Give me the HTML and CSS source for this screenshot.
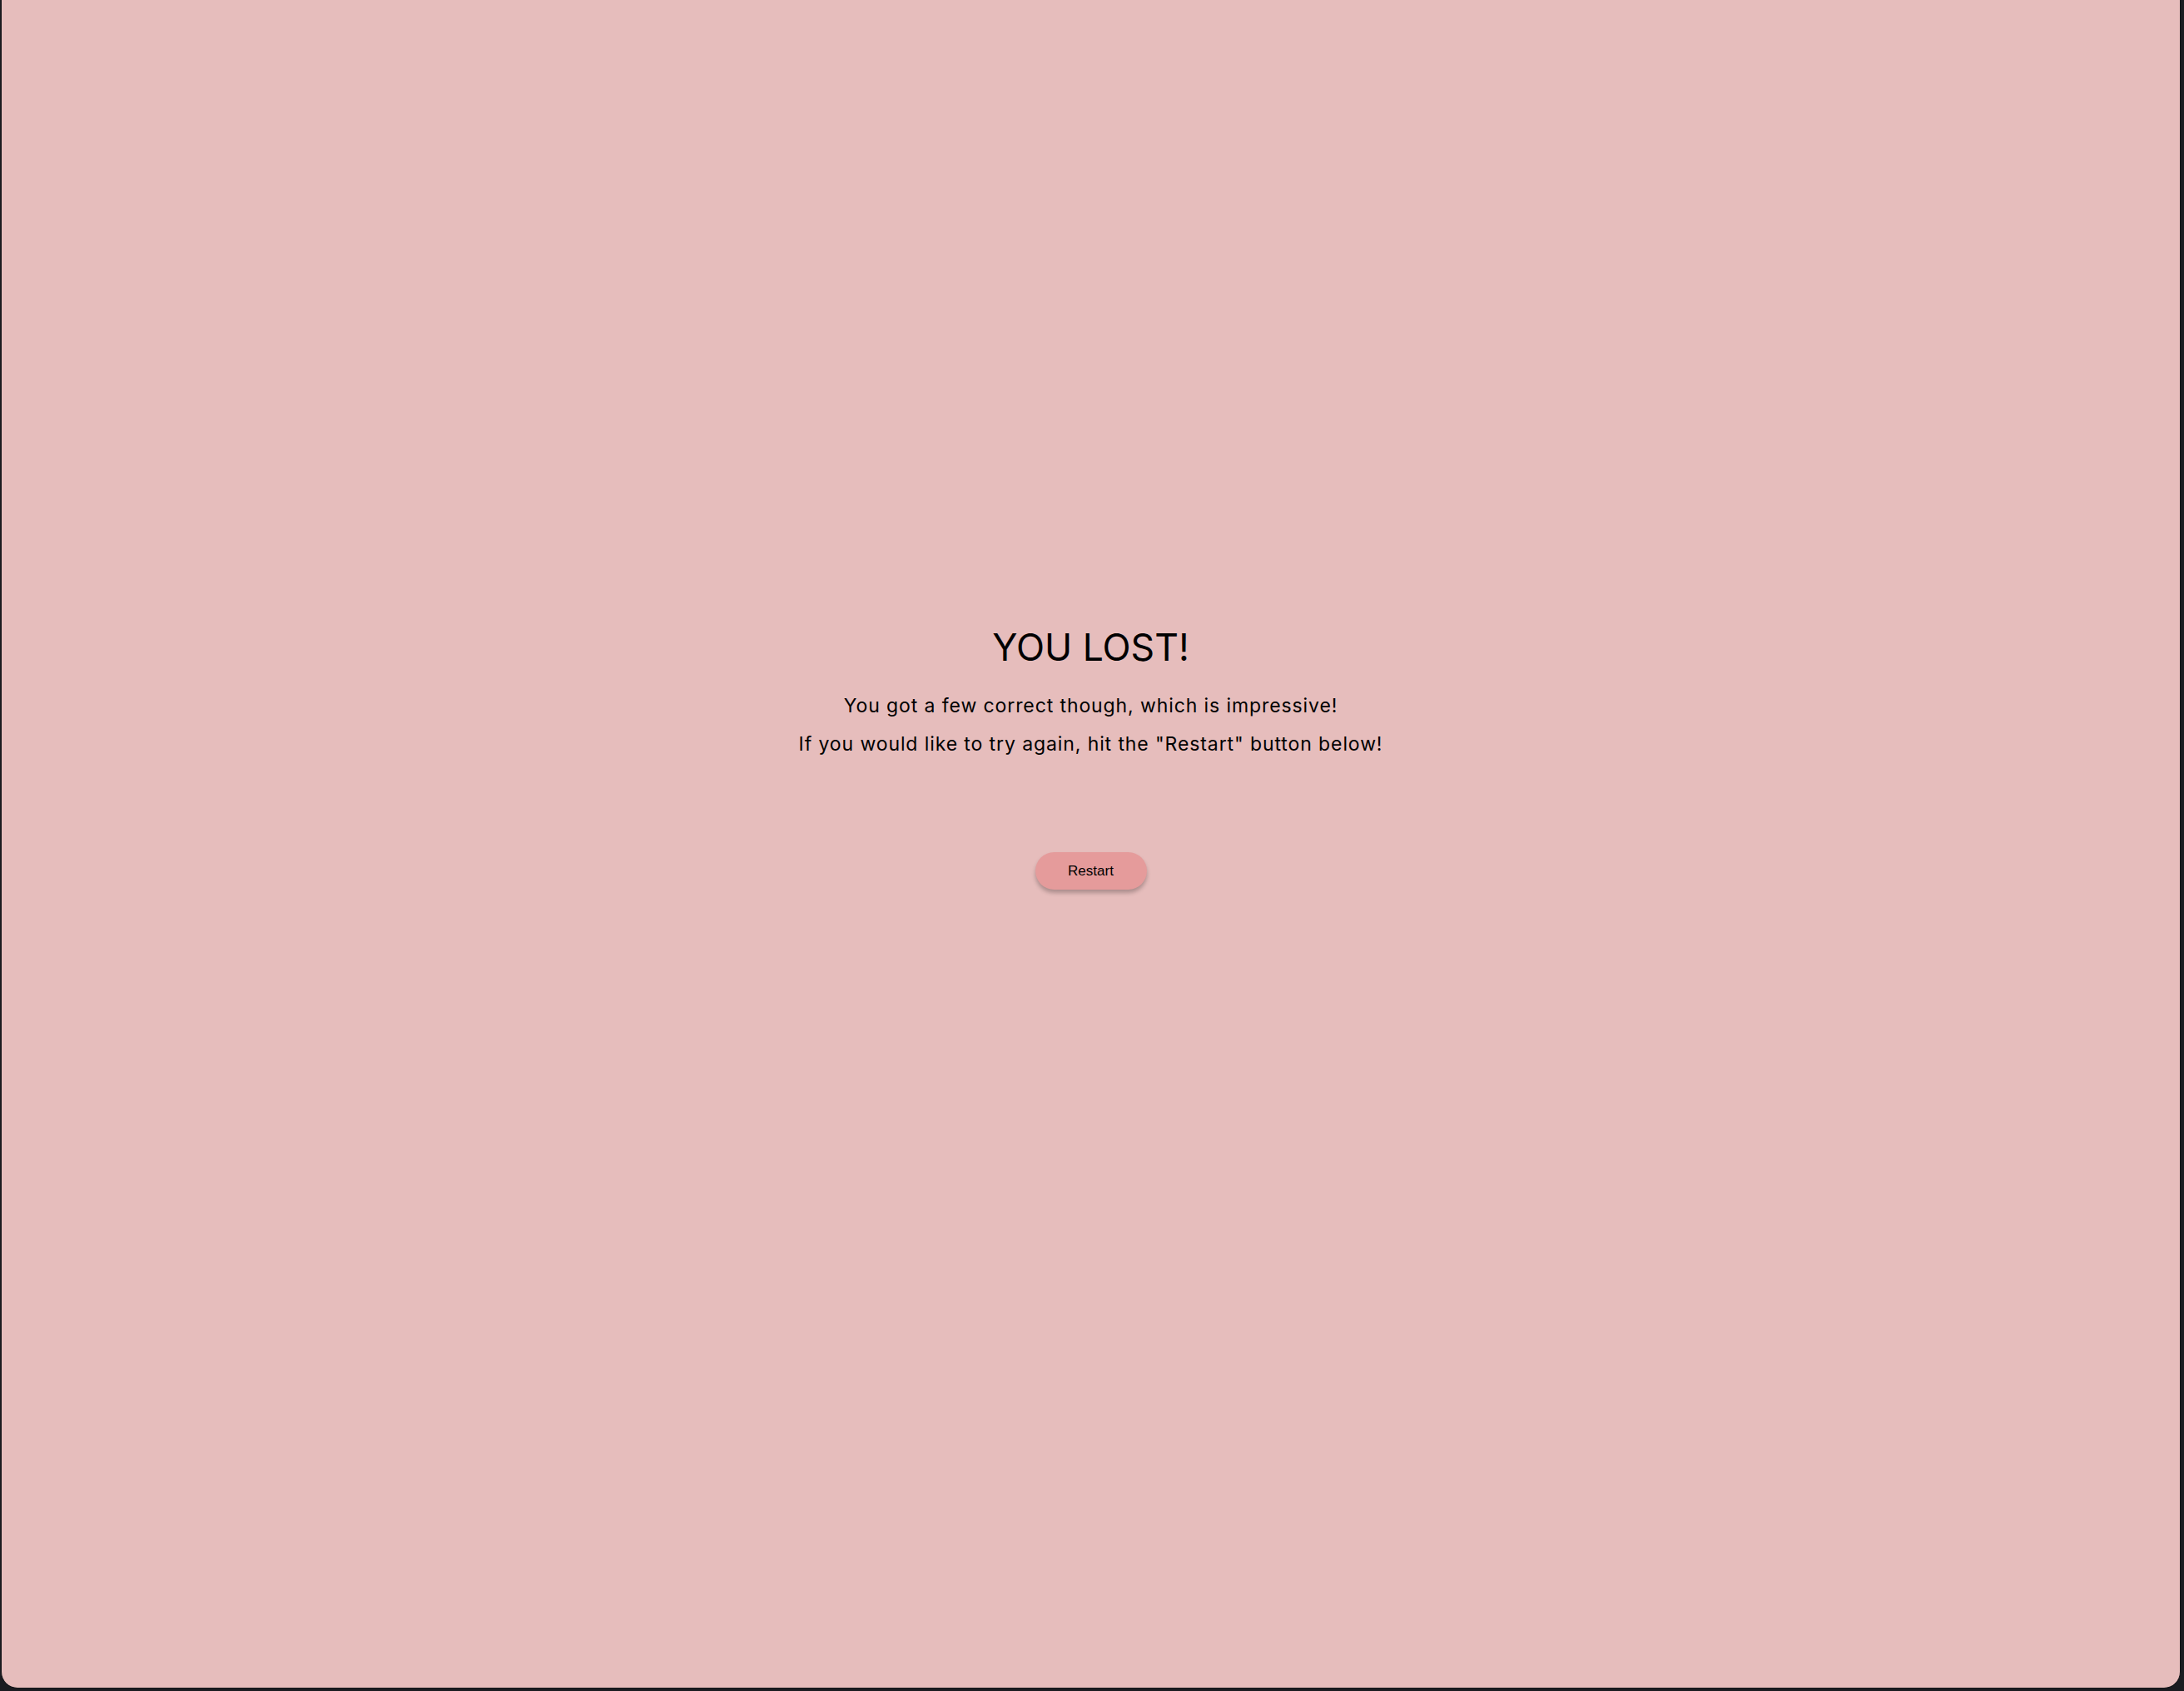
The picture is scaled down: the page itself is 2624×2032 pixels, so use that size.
FILE: index.html
```html
<!DOCTYPE html>
<html lang="en">
<head>
<meta charset="utf-8">
<title>You lost</title>
<link rel="stylesheet" href="styles.css">
</head>
<body>
<div class="frame">
  <main class="result">
    <h1 class="result-title">YOU LOST!</h1>
    <p class="result-text">You got a few correct though, which is impressive!</p>
    <p class="result-text">If you would like to try again, hit the "Restart" button below!</p>
    <button class="restart-btn" type="button">Restart</button>
  </main>
</div>
</body>
</html>
```

FILE: styles.css
```css
html, body {
  margin: 0;
  padding: 0;
  background: #1b1c21;
  height: 100%;
  overflow: hidden;
}

.frame {
  box-sizing: border-box;
  margin-left: 1px;
  width: 2619px;
  height: 2029px;
  background: #e6bdbc;
  border: 1px solid #141518;
  border-top: none;
  border-radius: 0 0 20px 20px;
}

.result {
  display: flex;
  flex-direction: column;
  align-items: center;
  padding-top: 750px;
  font-family: "Inter", "Liberation Sans", sans-serif;
  color: #000;
}

.result-title {
  margin: 0 0 19px;
  font-size: 44.5px;
  line-height: 56px;
  font-weight: 400;
}

.result-text {
  margin: 0;
  font-size: 23px;
  line-height: 46px;
  letter-spacing: 0.9px;
}

.restart-btn {
  margin-top: 107px;
  width: 134px;
  height: 45px;
  border: none;
  border-radius: 23px;
  background: #e59b9b;
  font-family: "Liberation Sans", Arial, sans-serif;
  font-size: 17px;
  color: #000;
  box-shadow: 0 4px 5px rgba(0, 0, 0, 0.25);
  cursor: pointer;
}
```
